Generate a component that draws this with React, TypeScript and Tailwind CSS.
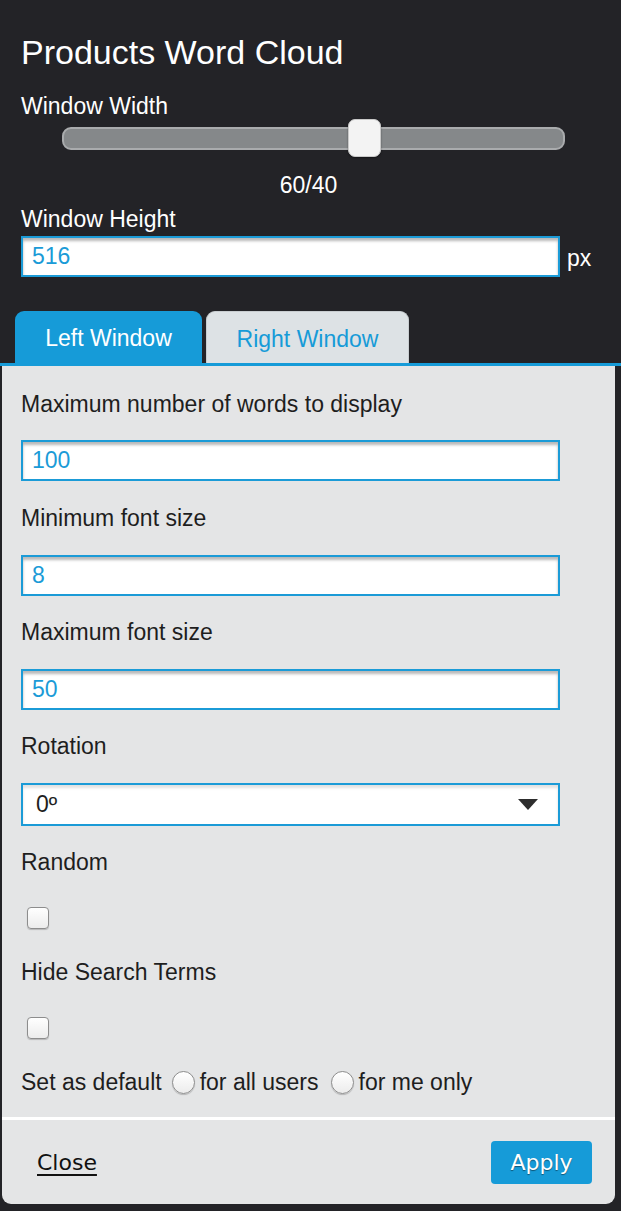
import React from "react";

const font = "font-['Liberation_Sans',Arial,Helvetica,sans-serif]";

function Label({ children, dark = true }: { children: React.ReactNode; dark?: boolean }) {
  return (
    <div className={`text-[23px] leading-[26px] ${dark ? "text-[#1e1e1e]" : "text-white"}`}>
      {children}
    </div>
  );
}

function TextField({ value }: { value: string }) {
  return (
    <div className="flex h-[41px] w-[539px] items-center border-2 border-[#1b9bd7] bg-white pl-[9px] text-[23px] text-[#1b9bd7] shadow-[inset_0_3px_3px_rgba(0,0,0,0.28)]">
      {value}
    </div>
  );
}

function Checkbox() {
  return (
    <div className="ml-[6px] h-[22px] w-[22px] rounded-[4px] border border-[#8d8d8d] bg-gradient-to-b from-white to-[#ececec] shadow-[0_1px_1px_rgba(0,0,0,0.2)]" />
  );
}

function Radio() {
  return (
    <div className="h-[23px] w-[23px] rounded-full border border-[#8d8d8d] bg-gradient-to-b from-white to-[#ececec] shadow-[0_1px_1px_rgba(0,0,0,0.2)]" />
  );
}

export default function App() {
  return (
    <div className={`flex h-[1211px] w-[621px] flex-col bg-[#232327] ${font}`}>
      <div className="px-[21px] pt-[32px] text-white">
        <h1 className="text-[34px] leading-[40px]">Products Word Cloud</h1>

        <div className="mt-[21px]">
          <Label dark={false}>Window Width</Label>
        </div>

        <div className="relative ml-[41px] flex h-[38px] w-[503px] items-center">
          <div className="h-[23px] w-full rounded-[9px] border-2 border-[#a9abad] bg-[#85888a]" />
          <div className="absolute left-[286px] top-0 h-[38px] w-[33px] rounded-[7px] border border-[#c9c9c9] bg-[#f3f3f3] shadow-[0_1px_2px_rgba(0,0,0,0.4)]" />
        </div>

        <div className="mt-[15px] w-[575px] text-center text-[23px] leading-[26px]">60/40</div>

        <div className="mt-[8px]">
          <Label dark={false}>Window Height</Label>
        </div>

        <div className="mt-[4px] flex items-center">
          <TextField value="516" />
          <span className="ml-[7px] mt-[4px] text-[23px]">px</span>
        </div>
      </div>

      <div className="mt-[34px] flex gap-[4px] pl-[15px]">
        <div className="flex h-[52px] w-[187px] items-center justify-center rounded-t-[9px] bg-[#169bd8] pt-[3px] text-[23px] text-white">
          Left Window
        </div>
        <div className="flex h-[52px] w-[203px] items-center justify-center rounded-t-[9px] border border-b-0 border-[#c8cdd0] bg-[#dde2e5] pt-[3px] text-[23px] text-[#169bd8]">
          Right Window
        </div>
      </div>

      <div className="mb-[7px] flex flex-1 flex-col border-t-[3px] border-[#169bd8]">
        <div className="ml-[2px] mr-[6px] flex flex-1 flex-col rounded-b-[9px] bg-[#e4e5e6]">
          <div className="flex flex-col px-[19px] pt-[25px]">
            <Label>Maximum number of words to display</Label>
            <div className="mt-[23px]">
              <TextField value="100" />
            </div>

            <div className="mt-[24px]">
              <Label>Minimum font size</Label>
            </div>
            <div className="mt-[24px]">
              <TextField value="8" />
            </div>

            <div className="mt-[23px]">
              <Label>Maximum font size</Label>
            </div>
            <div className="mt-[24px]">
              <TextField value="50" />
            </div>

            <div className="mt-[23px]">
              <Label>Rotation</Label>
            </div>
            <div className="mt-[24px] flex h-[43px] w-[539px] items-center justify-between border-2 border-[#1b9bd7] bg-white pl-[13px] pr-[20px] text-[23px] text-[#1e1e1e] shadow-[inset_0_3px_3px_rgba(0,0,0,0.12)]">
              <span>0º</span>
              <svg width="20" height="11" viewBox="0 0 20 11">
                <path d="M0 0 L20 0 L10 11 Z" fill="#2d2d2d" />
              </svg>
            </div>

            <div className="mt-[23px]">
              <Label>Random</Label>
            </div>
            <div className="mt-[32px]">
              <Checkbox />
            </div>

            <div className="mt-[30px]">
              <Label>Hide Search Terms</Label>
            </div>
            <div className="mt-[32px]">
              <Checkbox />
            </div>

            <div className="mt-[30px] flex items-center text-[23px] leading-[26px] text-[#1e1e1e]">
              <span>Set as default</span>
              <span className="ml-[10px] mr-[5px]">
                <Radio />
              </span>
              <span>for all users</span>
              <span className="ml-[12px] mr-[5px]">
                <Radio />
              </span>
              <span>for me only</span>
            </div>
          </div>

          <div className="mt-auto flex h-[87px] items-center justify-between border-t-[3px] border-white pl-[35px] pr-[23px]">
            <span className="font-['DejaVu_Sans',Verdana,sans-serif] text-[22px] text-[#111] underline underline-offset-[4px]">
              Close
            </span>
            <button className="flex h-[43px] w-[101px] items-center justify-center rounded-[4px] bg-[#169bd8] font-['DejaVu_Sans',Verdana,sans-serif] text-[22px] text-white [text-shadow:0_1px_1px_rgba(0,0,0,0.45)]">
              Apply
            </button>
          </div>
        </div>
      </div>
    </div>
  );
}
